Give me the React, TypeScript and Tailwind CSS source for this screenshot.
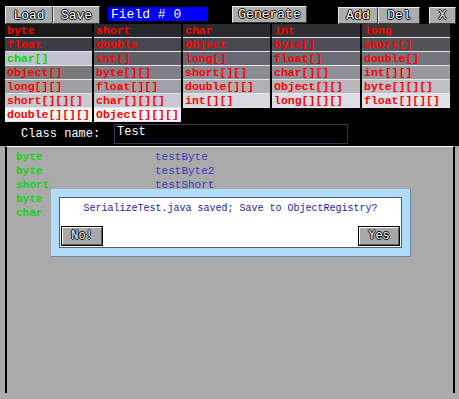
import React from "react";

type Cell = { label: string; bg: string; selected?: boolean };

const columns: Cell[][] = [
  [
    { label: "byte", bg: "bg-[#1a1a1a]" },
    { label: "float", bg: "bg-[#3c3c44]" },
    { label: "char[]", bg: "bg-[#c2c2d2]", selected: true },
    { label: "Object[]", bg: "bg-[#7a7a7a]" },
    { label: "long[][]", bg: "bg-[#a0a0a2]" },
    { label: "short[][][]", bg: "bg-[#c8c8ce]" },
    { label: "double[][][]", bg: "bg-[#f6f6f6]" },
  ],
  [
    { label: "short", bg: "bg-[#28282c]" },
    { label: "double", bg: "bg-[#46464e]" },
    { label: "int[]", bg: "bg-[#5e5e66]" },
    { label: "byte[][]", bg: "bg-[#80808a]" },
    { label: "float[][]", bg: "bg-[#a0a0a8]" },
    { label: "char[][][]", bg: "bg-[#c8c8d0]" },
    { label: "Object[][][]", bg: "bg-[#f4f4f8]" },
  ],
  [
    { label: "char", bg: "bg-[#2a2a2e]" },
    { label: "Object", bg: "bg-[#48484e]" },
    { label: "long[]", bg: "bg-[#686874]" },
    { label: "short[][]", bg: "bg-[#8c8c94]" },
    { label: "double[][]", bg: "bg-[#b0b0b8]" },
    { label: "int[][]", bg: "bg-[#d8d8e0]" },
  ],
  [
    { label: "int", bg: "bg-[#303034]" },
    { label: "byte[]", bg: "bg-[#4e4e58]" },
    { label: "float[]", bg: "bg-[#6c6c74]" },
    { label: "char[][]", bg: "bg-[#909098]" },
    { label: "Object[][]", bg: "bg-[#b8b8bc]" },
    { label: "long[][][]", bg: "bg-[#dcdce4]" },
  ],
  [
    { label: "long", bg: "bg-[#383838]" },
    { label: "short[]", bg: "bg-[#545458]" },
    { label: "double[]", bg: "bg-[#74747c]" },
    { label: "int[][]", bg: "bg-[#98989f]" },
    { label: "byte[][][]", bg: "bg-[#c0c0c4]" },
    { label: "float[][][]", bg: "bg-[#e0e0e8]" },
  ],
];

const widths = ["w-[87px]", "w-[87px]", "w-[87px]", "w-[88px]", "w-[88px]"];

const fields = [
  { type: "byte", name: "testByte" },
  { type: "byte", name: "testByte2" },
  { type: "short", name: "testShort" },
  { type: "byte", name: "" },
  { type: "char", name: "" },
];

const outline =
  "[text-shadow:1px_0_0_#000,-1px_0_0_#000,0_1px_0_#000,0_-1px_0_#000]";

function ToolButton({ label, className }: { label: string; className: string }) {
  return (
    <button
      type="button"
      className={`flex items-center justify-center border border-t-[#e6e6e6] border-l-[#e6e6e6] border-b-[#3a3a3a] border-r-[#3a3a3a] bg-[#acacac] text-[13px] leading-none text-white ${outline} ${className}`}
    >
      {label}
    </button>
  );
}

function DialogButton({ label }: { label: string }) {
  return (
    <button
      type="button"
      className="h-[20px] w-[42px] border border-black bg-[#a8a8a8] p-0"
    >
      <span
        className={`flex h-full w-full items-center justify-center border border-t-white border-l-white border-b-[#606060] border-r-[#606060] text-[12px] leading-none text-white ${outline}`}
      >
        {label}
      </span>
    </button>
  );
}

export default function App() {
  return (
    <div className="relative h-[399px] w-[459px] overflow-hidden bg-[#aaaaaa] font-['Liberation_Mono',monospace]">
      <div className="h-[146px] bg-black">
        {/* toolbar */}
        <div className="flex h-[24px] items-start pt-[6px]">
          <ToolButton label="Load" className="ml-[5px] h-[18px] w-[48px]" />
          <ToolButton label="Save" className="h-[18px] w-[47px]" />
          <div className="ml-[8px] mt-[1px] flex h-[14px] w-[100px] items-center bg-[#0000ff] pl-[3px] text-[13px] leading-none text-white">
            Field # 0
          </div>
          <ToolButton label="Generate" className="ml-[24px] h-[17px] w-[75px]" />
          <ToolButton label="Add" className="ml-[31px] mt-[1px] h-[17px] w-[40px]" />
          <ToolButton label="Del" className="mt-[1px] h-[17px] w-[42px]" />
          <ToolButton label="X" className="ml-[9px] mt-[1px] h-[17px] w-[27px]" />
        </div>

        {/* type grid */}
        <div className="ml-[5px] flex h-[98px] items-start gap-[2px]">
          {columns.map((col, ci) => (
            <div key={ci} className={`flex flex-col ${widths[ci]}`}>
              {col.map((cell) => (
                <div
                  key={cell.label}
                  className={`flex h-[14px] items-center overflow-hidden whitespace-nowrap border-b border-b-[#e4e4ea] pl-[2px] text-[11.5px] font-bold leading-none ${cell.bg} ${
                    cell.selected ? "text-[#00dc00]" : "text-[#ff0000]"
                  }`}
                >
                  {cell.label}
                </div>
              ))}
            </div>
          ))}
        </div>

        {/* class name */}
        <div className="mt-[2px] flex items-center">
          <span className="ml-[21px] w-[93px] text-[12px] text-white">Class name:</span>
          <div className="flex h-[20px] w-[234px] items-start border border-[#3a3458] pl-[2px] pt-[1px] text-[12px] leading-none text-white">
            Test
          </div>
        </div>
      </div>

      {/* field list */}
      <div className="ml-[5px] h-[247px] w-[450px] border-x-2 border-t border-x-black border-t-white bg-[#aaaaaa] pl-[9px] pt-[3px]">
        {fields.map((f, i) => (
          <div key={i} className="flex h-[14px] items-center text-[11px] font-bold leading-none">
            <span className="w-[139px] text-[#14d414]">{f.type}</span>
            <span className="font-normal text-[#3c3cc0]">{f.name}</span>
          </div>
        ))}
      </div>

      {/* save dialog */}
      <div className="absolute left-[51px] top-[189px] h-[68px] w-[360px] border-b border-r border-b-[#6a8aa8] border-r-[#6a8aa8] bg-[#b2dcfc] pl-[8px] pt-[8px]">
        <div className="flex h-[51px] w-[343px] flex-col border border-[#4e5e70] bg-white px-[1px]">
          <div className="mt-[6px] text-center text-[10px] leading-none text-[#1c1ca0]">
            SerializeTest.java saved; Save to ObjectRegistry?
          </div>
          <div className="mt-auto mb-[1px] flex justify-between">
            <DialogButton label="No!" />
            <DialogButton label="Yes" />
          </div>
        </div>
      </div>
    </div>
  );
}
